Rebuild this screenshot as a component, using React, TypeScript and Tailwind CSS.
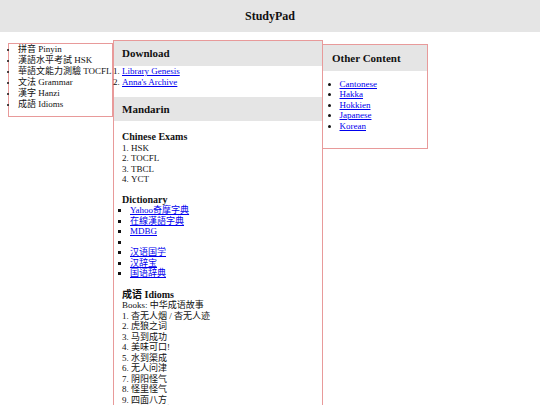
const serifTC = {
  fontFamily: '"Liberation Serif", "Noto Sans CJK TC", serif',
};

const topics = [
  "拼音 Pinyin",
  "漢語水平考試 HSK",
  "華語文能力測驗 TOCFL",
  "文法 Grammar",
  "漢字 Hanzi",
  "成語 Idioms",
];

const exams = ["HSK", "TOCFL", "TBCL", "YCT"];

const dictionaries = ["Yahoo奇摩字典", "在線漢語字典", "MDBG", "", "汉语国学", "汉辞宝", "国语辞典"];

const idioms = [
  "杳无人烟 / 杳无人迹",
  "虎狼之词",
  "马到成功",
  "美味可口!",
  "水到渠成",
  "无人问津",
  "阴阳怪气",
  "怪里怪气",
  "四面八方",
  "一见钟情",
  "画蛇添足",
];

const others = ["Cantonese", "Hakka", "Hokkien", "Japanese", "Korean"];

function Link({ children }: { children: string }) {
  return <a className="text-[#0000ee] underline">{children}</a>;
}

function SectionHead({ title, className = "" }: { title: string; className?: string }) {
  return (
    <div className={`flex items-center bg-[#e5e5e5] px-[8px] text-[11px] font-bold ${className}`}>
      {title}
    </div>
  );
}

export default function App() {
  return (
    <div
      className="h-[405px] overflow-hidden bg-white text-[9px] text-[#111]"
      style={{ fontFamily: '"Liberation Serif", "Noto Sans CJK SC", serif' }}
    >
      <header className="flex h-[32px] items-center justify-center bg-[#e5e5e5] text-[12px] font-bold">
        StudyPad
      </header>

      <div className="flex items-start pl-[8px]">
        <nav className="mt-[11px] w-[105px] border border-[#e89a9a] pb-[6px] pl-[9px]" style={serifTC}>
          <ul className="list-disc leading-[11px] marker:text-[8px]">
            {topics.map((t) => (
              <li key={t} className="whitespace-nowrap">
                {t}
              </li>
            ))}
          </ul>
        </nav>

        <main className="mt-[8px] w-[210px] border border-[#e89a9a] pb-[40px]">
          <SectionHead title="Download" className="h-[25px]" />
          <ol className="list-decimal pl-[8px] leading-[10.5px]">
            <li>
              <Link>Library Genesis</Link>
            </li>
            <li>
              <Link>Anna's Archive</Link>
            </li>
          </ol>

          <SectionHead title="Mandarin" className="mt-[10px] h-[24px]" />
          <div className="px-[8px]">
            <h4 className="mt-[10px] text-[10px] font-bold leading-[11.5px]">Chinese Exams</h4>
            <ol className="list-inside list-decimal leading-[10.5px]">
              {exams.map((e) => (
                <li key={e}>{e}</li>
              ))}
            </ol>

            <h4 className="mt-[9px] text-[10px] font-bold leading-[11.5px]">Dictionary</h4>
            <ul className="list-[square] pl-[8px] leading-[10.5px]" style={serifTC}>
              {dictionaries.map((d, i) => (
                <li key={i} className="h-[10.5px]">
                  {d ? <Link>{d}</Link> : null}
                </li>
              ))}
            </ul>

            <h4 className="mt-[10px] text-[10px] font-bold leading-[11.5px]">成语 Idioms</h4>
            <p className="leading-[10.5px]">Books: 中华成语故事</p>
            <ol className="list-inside list-decimal leading-[10.5px]">
              {idioms.map((d) => (
                <li key={d}>{d}</li>
              ))}
            </ol>
          </div>
        </main>

        <aside className="-ml-px mt-[12px] w-[106px] border border-[#e89a9a] pb-[17px]">
          <div className="flex h-[26px] items-center bg-[#e5e5e5] px-[9px] text-[11px] font-bold">
            Other Content
          </div>
          <ul className="mt-[7.5px] list-disc pl-[16.5px] leading-[10.5px]">
            {others.map((o) => (
              <li key={o}>
                <Link>{o}</Link>
              </li>
            ))}
          </ul>
        </aside>
      </div>
    </div>
  );
}
